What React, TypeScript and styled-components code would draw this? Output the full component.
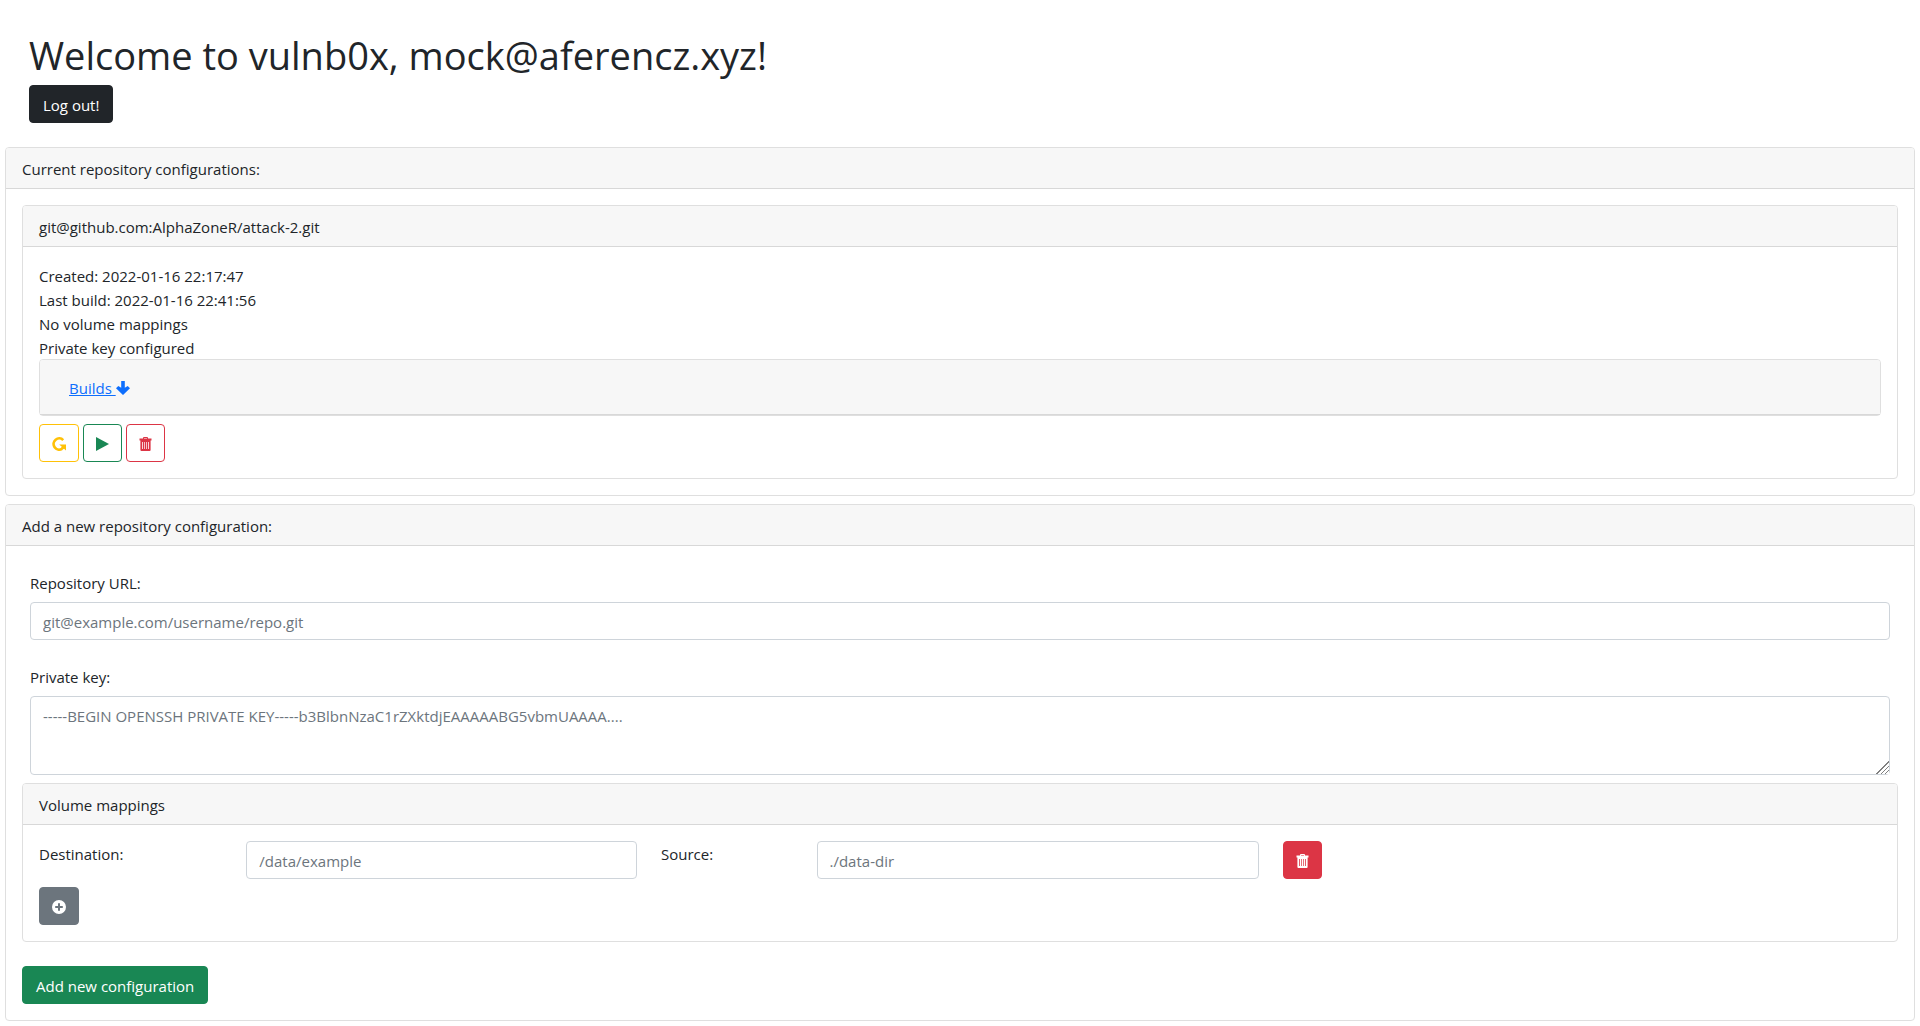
import React from "react";
import styled, { createGlobalStyle, css } from "styled-components";

const GlobalStyle = createGlobalStyle`
  *, *::before, *::after { box-sizing: border-box; }
  body {
    margin: 0;
    padding: 5px;
    background: #fff;
    color: #212529;
    font-family: "Open Sans", "Noto Sans", sans-serif;
    font-size: 15px;
    line-height: 24px;
  }
`;

const PageHeader = styled.header`
  padding: 26px 24px 24px;
`;

const Title = styled.h1`
  margin: 0 0 6px;
  font-size: 38px;
  font-weight: 400;
  line-height: 48px;
`;

const Stack = styled.main`
  display: flex;
  flex-direction: column;
  gap: 8px;
`;

const Card = styled.section`
  border: 1px solid #dfdfdf;
  border-radius: 4px;
  background: #fff;
`;

const CardHeader = styled.div`
  padding: 9px 16px 7px;
  background: #f7f7f7;
  border-bottom: 1px solid #d8d8d8;
  border-radius: 3px 3px 0 0;
`;

const CardTitle = styled.h2`
  margin: 0;
  font-size: 15px;
  font-weight: 400;
  line-height: 24px;
`;

const CardBody = styled.div`
  padding: 16px;
`;

const Facts = styled.ul`
  margin: 0 0 -1px;
  padding: 1px 0 0;
  list-style: none;
`;

const tones = {
  dark: "#212529",
  success: "#198754",
  danger: "#dc3545",
  warning: "#ffc107",
  secondary: "#6c757d",
};

type Tone = keyof typeof tones;

const Button = styled.button<{ $tone: Tone; $outline?: boolean }>`
  display: inline-flex;
  align-items: center;
  justify-content: center;
  height: 38px;
  padding: 7px 13px 5px;
  border: 1px solid ${(p) => tones[p.$tone]};
  border-radius: 4px;
  font: inherit;
  cursor: pointer;
  ${(p) =>
    p.$outline
      ? css`
          background: transparent;
          color: ${tones[p.$tone]};
        `
      : css`
          background: ${tones[p.$tone]};
          color: #fff;
        `}
`;

const IconButton = styled(Button)`
  padding: 7px 12px 5px;
`;

const BuildsLink = styled.a`
  display: inline-flex;
  align-items: center;
  padding: 7px 13px;
  color: #0d6efd;
  text-decoration: underline;
  white-space: pre;
`;

const Actions = styled.div`
  display: flex;
  gap: 4px;
  margin-top: 8px;
`;

const Field = styled.div`
  display: flex;
  flex-direction: column;
  gap: 7px;
  padding: 9px 8px 8px;
  margin-bottom: 8px;

  &:nth-of-type(2) {
    margin-bottom: 0;
  }
`;

const control = css`
  display: block;
  width: 100%;
  padding: 7px 12px 5px;
  border: 1px solid #ced4da;
  border-radius: 4px;
  background: #fff;
  color: #212529;
  font: inherit;

  &::placeholder {
    color: #6c757d;
    opacity: 1;
  }
`;

const Input = styled.input`
  ${control}
  height: 38px;
`;

const TextArea = styled.textarea`
  ${control}
  height: 79px;
  resize: vertical;

  &::-webkit-resizer {
    background:
      linear-gradient(135deg, #fff 50%, transparent 50%),
      repeating-linear-gradient(135deg, #808080 0 1px, #fff 1px 3px);
  }
`;

const MappingRow = styled.div`
  display: grid;
  grid-template-columns: 4fr 8fr 3fr 9fr 12fr;
  margin: 0 -12px 8px;
`;

const Cell = styled.div`
  min-width: 0;
  padding: 0 12px;
`;

const MappingLabel = styled.label`
  min-width: 0;
  padding: 1px 12px 0;
`;

const SubmitRow = styled.div`
  margin-top: 24px;
`;

const Icon = styled.svg<{ $narrow?: boolean }>`
  display: block;
  width: ${(p) => (p.$narrow ? 13 : 14)}px;
  height: 14px;
  flex: none;
  fill: currentColor;
`;

const TrashIcon = () => (
  <Icon $narrow viewBox="0 0 13 14" aria-hidden="true">
    <path
      fillRule="evenodd"
      d="M4 1.500V1q0-1 1-1h3q1 0 1 1v.5h3.500v2H11.600V13q0 1-1 1H2.400q-1 0-1-1V3.500H.5v-2zM5 1v.5h3V1zM3.200 5v7h.8V5zM5.200 5v7h.7V5zM7.100 5v7h.7V5zM9 5v7h.8V5z"
    />
  </Icon>
);

const PlayIcon = () => (
  <Icon $narrow viewBox="0 0 13 14" aria-hidden="true">
    <path d="M0 0L13 7L0 14z" />
  </Icon>
);

const RebuildIcon = () => (
  <Icon viewBox="0 0 14 14" aria-hidden="true">
    <path d="M11.200 3.100A5.600 5.600 0 1 0 10 11.900" fill="none" stroke="currentColor" strokeWidth="2.700" />
    <path d="M7.200 7.400H14V13.400L12 11.700L10 13L8.600 11.200L9.800 9.800z" />
  </Icon>
);

const ArrowDownIcon = () => (
  <Icon viewBox="0 0 14 14" aria-hidden="true">
    <path d="M5.200 0h3.600v6.700l2.900-1.700L14 7.200L7 14L0 7.200L2.300 5l2.900 1.700z" />
  </Icon>
);

const PlusCircleIcon = () => (
  <Icon viewBox="0 0 14 14" aria-hidden="true">
    <path
      fillRule="evenodd"
      d="M7 0a7 7 0 1 1 0 14A7 7 0 0 1 7 0zM6 3.200V6H3.200v2H6v2.800h2V8h2.800V6H8V3.200z"
    />
  </Icon>
);

const facts = [
  "Created: 2022-01-16 22:17:47",
  "Last build: 2022-01-16 22:41:56",
  "No volume mappings",
  "Private key configured",
];

export default function App() {
  return (
    <>
      <GlobalStyle />
      <PageHeader>
        <Title>Welcome to vulnb0x, mock@aferencz.xyz!</Title>
        <Button type="button" $tone="dark">Log out!</Button>
      </PageHeader>
      <Stack>
        <Card>
          <CardHeader>
            <CardTitle>Current repository configurations:</CardTitle>
          </CardHeader>
          <CardBody>
            <Card>
              <CardHeader>
                <CardTitle>git@github.com:AlphaZoneR/attack-2.git</CardTitle>
              </CardHeader>
              <CardBody>
                <Facts>
                  {facts.map((fact) => (
                    <li key={fact}>{fact}</li>
                  ))}
                </Facts>
                <Card>
                  <CardHeader>
                    <BuildsLink href="#builds">
                      <span>Builds </span>
                      <ArrowDownIcon />
                    </BuildsLink>
                  </CardHeader>
                </Card>
                <Actions>
                  <IconButton type="button" $tone="warning" $outline aria-label="Rebuild">
                    <RebuildIcon />
                  </IconButton>
                  <IconButton type="button" $tone="success" $outline aria-label="Run">
                    <PlayIcon />
                  </IconButton>
                  <IconButton type="button" $tone="danger" $outline aria-label="Delete">
                    <TrashIcon />
                  </IconButton>
                </Actions>
              </CardBody>
            </Card>
          </CardBody>
        </Card>

        <Card>
          <CardHeader>
            <CardTitle>Add a new repository configuration:</CardTitle>
          </CardHeader>
          <CardBody as="form">
            <Field>
              <label htmlFor="repo-url">Repository URL:</label>
              <Input id="repo-url" type="text" placeholder="git@example.com/username/repo.git" />
            </Field>
            <Field>
              <label htmlFor="private-key">Private key:</label>
              <TextArea
                id="private-key"
                placeholder="-----BEGIN OPENSSH PRIVATE KEY-----b3BlbnNzaC1rZXktdjEAAAAABG5vbmUAAAA...."
              />
            </Field>
            <Card>
              <CardHeader>
                <CardTitle>Volume mappings</CardTitle>
              </CardHeader>
              <CardBody>
                <MappingRow>
                  <MappingLabel htmlFor="destination">Destination:</MappingLabel>
                  <Cell>
                    <Input id="destination" type="text" placeholder="/data/example" />
                  </Cell>
                  <MappingLabel htmlFor="source">Source:</MappingLabel>
                  <Cell>
                    <Input id="source" type="text" placeholder="./data-dir" />
                  </Cell>
                  <Cell>
                    <IconButton type="button" $tone="danger" aria-label="Remove mapping">
                      <TrashIcon />
                    </IconButton>
                  </Cell>
                </MappingRow>
                <IconButton type="button" $tone="secondary" aria-label="Add mapping">
                  <PlusCircleIcon />
                </IconButton>
              </CardBody>
            </Card>
            <SubmitRow>
              <Button type="submit" $tone="success">Add new configuration</Button>
            </SubmitRow>
          </CardBody>
        </Card>
      </Stack>
    </>
  );
}
